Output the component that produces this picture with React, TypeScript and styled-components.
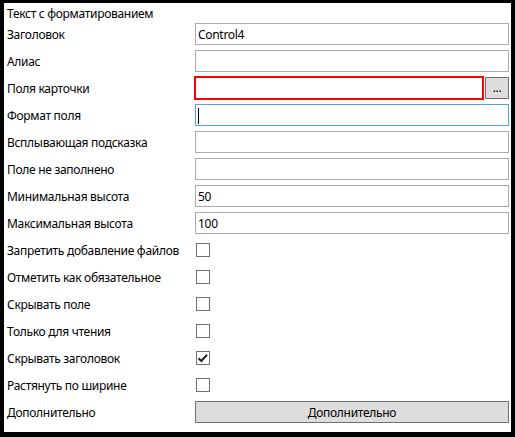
import { Fragment } from "react";
import styled, { createGlobalStyle } from "styled-components";

const GlobalStyle = createGlobalStyle`
  html, body {
    margin: 0;
    padding: 0;
    background: #000;
  }
  body {
    font-family: "Noto Sans", "Segoe UI", sans-serif;
    font-size: 12px;
    letter-spacing: -0.3px;
    color: #000;
  }
`;

const Frame = styled.div`
  width: 515px;
  height: 437px;
  box-sizing: border-box;
  padding: 3px 4px 5px 4px;
  background: #000;
`;

const Panel = styled.div`
  background: #fff;
  height: 100%;
  box-sizing: border-box;
  padding: 0 2px 0 3px;
`;

const Title = styled.div`
  height: 20px;
  display: flex;
  align-items: center;
  padding-top: 1px;
  box-sizing: border-box;
`;

const Form = styled.div`
  display: grid;
  grid-template-columns: 188px 1fr;
  grid-auto-rows: 22px;
  row-gap: 5px;
`;

const Label = styled.div`
  display: flex;
  align-items: center;
  padding-top: 1px;
  white-space: nowrap;
`;

const Field = styled.div<{ $focused?: boolean }>`
  box-sizing: border-box;
  height: 22px;
  border: 1px solid ${(p) => (p.$focused ? "#569de5" : "#ababab")};
  background: #fff;
  display: flex;
  align-items: center;
  padding: 1px 2px 0;
`;

const Caret = styled.span`
  display: block;
  width: 1px;
  height: 16px;
  background: #000;
`;

const PickerRow = styled.div`
  display: flex;
  gap: 1px;
  align-items: center;
`;

const ErrorField = styled.div`
  flex: 1;
  box-sizing: border-box;
  height: 24px;
  margin: -1px 0 -1px -1px;
  border: 2px solid #ff0000;
  background: #fff;
`;

const Button = styled.button<{ $small?: boolean }>`
  box-sizing: border-box;
  height: 22px;
  width: ${(p) => (p.$small ? "24px" : "100%")};
  flex: none;
  border: 1px solid #707070;
  background: #dddddd;
  font-family: inherit;
  font-size: 12px;
  letter-spacing: inherit;
  color: #000;
  padding: 0 0 ${(p) => (p.$small ? "2px" : "0")};
  margin: 0;
  display: flex;
  align-items: center;
  justify-content: center;
`;

const CheckCell = styled.div`
  display: flex;
  align-items: center;
  padding-left: 1px;
`;

const Box = styled.div`
  box-sizing: border-box;
  width: 14px;
  height: 14px;
  border: 1px solid #707070;
  background: #fff;
  display: flex;
  align-items: center;
  justify-content: center;
`;

function CheckBox({ checked }: { checked?: boolean }) {
  return (
    <CheckCell>
      <Box>
        {checked && (
          <svg width="12" height="12" viewBox="0 0 12 12">
            <path
              d="M1.5 6.2 L4.3 9 L10 2.8"
              fill="none"
              stroke="#212121"
              strokeWidth="2"
            />
          </svg>
        )}
      </Box>
    </CheckCell>
  );
}

const textRows: { label: string; value?: string }[] = [
  { label: "Заголовок", value: "Control4" },
  { label: "Алиас" },
];

const afterRows: { label: string; value?: string }[] = [
  { label: "Всплывающая подсказка" },
  { label: "Поле не заполнено" },
  { label: "Минимальная высота", value: "50" },
  { label: "Максимальная высота", value: "100" },
];

const checkRows: { label: string; checked?: boolean }[] = [
  { label: "Запретить добавление файлов" },
  { label: "Отметить как обязательное" },
  { label: "Скрывать поле" },
  { label: "Только для чтения" },
  { label: "Скрывать заголовок", checked: true },
  { label: "Растянуть по ширине" },
];

export default function App() {
  return (
    <>
      <GlobalStyle />
      <Frame>
        <Panel>
          <Title>Текст с форматированием</Title>
          <Form>
            {textRows.map((r) => (
              <Fragment key={r.label}>
                <Label>{r.label}</Label>
                <Field>{r.value}</Field>
              </Fragment>
            ))}
            <Label>Поля карточки</Label>
            <PickerRow>
              <ErrorField />
              <Button $small>...</Button>
            </PickerRow>
            <Label>Формат поля</Label>
            <Field $focused>
              <Caret />
            </Field>
            {afterRows.map((r) => (
              <Fragment key={r.label}>
                <Label>{r.label}</Label>
                <Field>{r.value}</Field>
              </Fragment>
            ))}
            {checkRows.map((r) => (
              <Fragment key={r.label}>
                <Label>{r.label}</Label>
                <CheckBox checked={r.checked} />
              </Fragment>
            ))}
            <Label>Дополнительно</Label>
            <Button>Дополнительно</Button>
          </Form>
        </Panel>
      </Frame>
    </>
  );
}
